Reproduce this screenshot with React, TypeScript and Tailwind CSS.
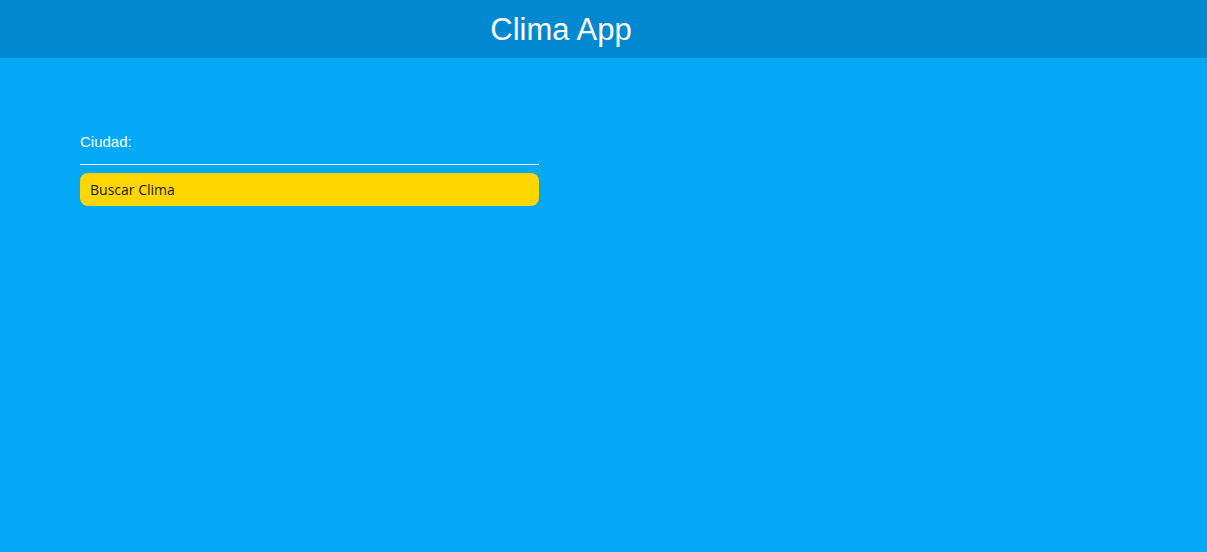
export default function App() {
  return (
    <div className="min-h-[552px] w-full bg-[#03a9f4] font-['Liberation_Sans',Arial,sans-serif]">
      <header className="h-[58px] bg-[#0288d1] flex items-center">
        <div className="w-[1122px] flex justify-center">
          <h1 className="text-white text-[31px] leading-none">Clima App</h1>
        </div>
      </header>
      <main className="pl-[80px] pt-[75px]">
        <form className="w-[459px] flex flex-col">
          <label className="text-white text-[15px] leading-[18px]">Ciudad:</label>
          <input
            type="text"
            className="h-[14px] border-b border-white bg-transparent outline-none text-white"
          />
          <button
            type="button"
            className="mt-[8px] h-[33px] rounded-[8px] bg-[#ffd600] text-left pl-[10px] text-[14px] text-[#1a1a1a] font-['Open_Sans',sans-serif]"
          >
            Buscar Clima
          </button>
        </form>
      </main>
    </div>
  );
}
